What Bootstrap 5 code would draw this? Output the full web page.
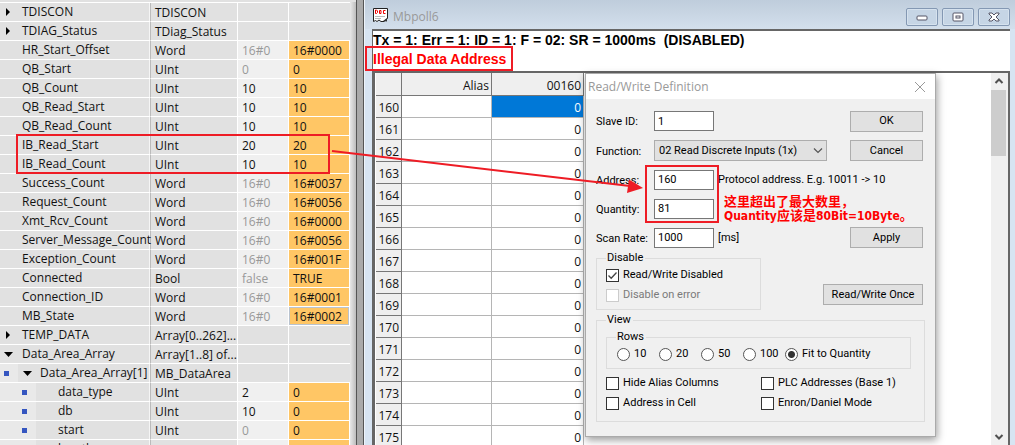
<!DOCTYPE html>
<html lang="en">
<head>
<meta charset="utf-8">
<meta name="viewport" content="width=device-width, initial-scale=1">
<title>Mbpoll6</title>
<link rel="stylesheet" href="https://cdn.jsdelivr.net/npm/bootstrap@5.3.0/dist/css/bootstrap.min.css">
<style>
body{font:12px/18px "Noto Sans","Noto Sans CJK SC",sans-serif;color:#111;background:#aaa}
/* variable table */
.vars-pane{flex:0 0 356px;background:#e1e1e1;padding-top:2px}
.vars{width:350px;table-layout:fixed;border-collapse:separate;border-spacing:0;border-top:1px solid #fff;font-family:"Open Sans","Noto Sans",sans-serif;font-size:12px;white-space:nowrap}
.vars td{height:19px;padding:1px 0 0 4px;border-bottom:1px solid #fff;line-height:17px}
.vars td:first-child{border-right:1px solid #bbb;box-shadow:inset -1px 0 #f5f5f5;padding:0 0 0 22px}
.vars td:nth-child(2),.vars td:nth-child(3){border-right:1px solid #fff}
.vars .v1{background:#f0f0f0}
.vars .v2{background:#ffc665;border-right:1px solid #fff}
.vars .dim{color:#999}
.vars .lv{display:flex;align-items:center;margin-left:-22px;height:18px;line-height:18px}
.vars .mk{width:22px;flex:none;display:flex;align-items:center;padding-left:5px}
.vars .ind{width:18px;flex:none;align-self:stretch;display:flex;align-items:center;background:#e9e9e9;padding-left:4px}
.vars .sel{box-shadow:inset 0 0 0 1px #b9c3cf}
.dot{width:5px;height:5px;background:#3556c0;display:block}
.vbar{flex:0 0 8px;background:#aaa;border-left:1px solid #555;border-right:1px solid #555}
.shade{flex:0 0 6px;background:linear-gradient(90deg,#e8e8e8,#bdbdbd)}
/* document window */
.mdi{background:#d7e4f2;padding:0 5px 0 7px;border-left:1px solid #eef4fa;overflow:hidden}
.titlebar{height:29px;background:linear-gradient(#bfcddc,#d3dfec);margin:0 -5px 0 -7px;padding:0 5px 0 7px;font-family:"Open Sans",sans-serif;font-size:12px;color:#999}
.titlebar svg{display:block}
.wbtn{width:32px;height:18px;padding:0;margin-top:5px;border:1px solid #8498b3;border-radius:2px;background:#c6d5e5;display:flex;align-items:center;justify-content:center;box-shadow:inset 0 0 0 1px #d6e2ee}
.wtitle{padding-top:6px}
.wicon{margin-top:3px}
.status{height:42px;background:#fff;border-top:2px solid #666;border-left:1px solid #666;color:#000;font:bold 14px/19px "Liberation Sans",sans-serif;white-space:pre}
.status .err{color:#f00}
.client{border:2px solid #666;border-bottom:0;border-left-width:3px;background:#fff;min-height:0;overflow:hidden}
.gridt{width:208px;table-layout:fixed;border-collapse:separate;border-spacing:0;font:12px/19px "Open Sans",sans-serif;text-align:right;margin-left:1px}
.gridt th,.gridt td{height:22px;padding:2px 2px 0;font-weight:400;border-right:1px solid #b5b5b5;border-bottom:1px solid #b5b5b5}
.gridt thead th{height:23px;padding-top:3px}
.gridt th{background:#efefef;border-color:#777}
.gridt .cur{background:#0078d7;color:#fff}
.sbar{flex:0 0 17px;background:#f0f0f0;padding-right:2px}
.thumb{height:66px;background:#cdcdcd}
.sarrow{height:17px;display:flex;align-items:center;justify-content:center}
/* dialog */
.dlg{position:absolute;left:585px;top:73px;width:351px;background:#f0f0f0;border:1px solid #aaa;box-shadow:1px 3px 8px rgba(0,0,0,.4);font:11px/14px Roboto,sans-serif;color:#000}
.dlg-title{height:25px;background:#fff;padding:0 9px 0 2px;font:12px/24px "Open Sans",sans-serif;color:#999}
.dlg-body{padding:7px 10px 14px 10px}
.frow{height:29px;display:flex;align-items:center}
.frow.first{height:30px}
.frow>label{width:58px;flex:none;padding-top:2px}
.tbox{width:60px;height:20px;border:1px solid #777;background:#fff;padding:0 3px;border-radius:0;color:#000}
.sbox{width:173px;height:21px;border:1px solid #adadad;background:#e1e1e1 url("data:image/svg+xml,%3Csvg xmlns='http://www.w3.org/2000/svg' width='10' height='6'%3E%3Cpath d='M1 .5l4 4 4-4' fill='none' stroke='%23555' stroke-width='1.2'/%3E%3C/svg%3E") no-repeat right 3px center;padding:0 4px;appearance:none;border-radius:0;color:#000}
.pbtn{width:73px;height:21px;padding:0;border:1px solid #adadad;background:#e1e1e1;color:#000;margin-left:auto;margin-right:2px}
.pbtn.wide{width:100px;align-self:end;margin-bottom:5px}
.grp{border:1px solid #dcdcdc;padding:1px 9px 4px;margin:0;min-width:0}
.grp>legend{float:none;width:auto;font-size:11px;line-height:12px;margin:0;padding:0 2px 0 1px}
.grp-off{width:165px}
.ck{height:20px;display:flex;align-items:center;gap:4px;white-space:nowrap}
.ck input{appearance:none;width:13px;height:13px;flex:none;margin:0;border:1px solid #333;background:#fff}
.ck input[type=radio]{border-radius:50%;border-color:#555}
.ck input[type=radio]:checked{background:radial-gradient(circle,#333 0 3px,#fff 4px)}
.ck input[type=checkbox]:checked{background:#fff url("data:image/svg+xml,%3Csvg xmlns='http://www.w3.org/2000/svg' width='11' height='11'%3E%3Cpath d='M1.5 5.5l2.7 2.8L9.5 2.5' fill='none' stroke='%23444' stroke-width='1.3'/%3E%3C/svg%3E")}
.ck input:disabled{border-color:#ccc}
.ck.off{color:#7a7a7a}
.radios{display:grid;grid-template-columns:repeat(4,42px) 1fr;padding-left:1px}
.checks{display:grid;grid-template-columns:155px 1fr}
/* annotations */
.note{position:absolute;left:724px;top:195px;color:#f00;font:bold 12px/14px "DejaVu Sans Condensed","Noto Sans CJK SC",sans-serif;white-space:nowrap}
.note span{font-size:13px}
.marks{position:absolute;left:0;top:0;pointer-events:none}
</style>
</head>
<body>
<div class="d-flex vh-100 overflow-hidden position-relative">
  <div class="vars-pane d-flex overflow-hidden">
    <div><table class="vars"><colgroup><col style="width:151px"><col style="width:87px"><col style="width:51px"><col></colgroup><tbody id="vars"></tbody></table></div>
    <div class="shade"></div>
  </div>
  <div class="vbar"></div>
  <main class="mdi flex-fill d-flex flex-column">
    <div class="titlebar d-flex align-items-center gap-1">
      <svg class="wicon" width="17" height="17" viewBox="0 0 17 17"><path d="M1.500 1.500H15.500V11.500L12 14.500H9L7 13L5 14.500L3.500 13.500L1.500 14.500Z" fill="#fff" stroke="#222"/><path d="M3.500 3V6.500H4.500L5.500 5.500V4L4.500 3ZM7.500 3.500H9V6.500H7.500ZM13.500 3.500H11.500V6.500H13.500" fill="none" stroke="#e00"/><path d="M3 9.500H13M3 11.500H9" stroke="#bbb"/><path d="M11 14L15 11V14.500Z" fill="#333"/></svg>
      <span class="wtitle me-auto">Mbpoll6</span>
      <button class="wbtn" aria-label="Minimize"><svg width="12" height="10"><rect x="1" y="4" width="10" height="4" rx="1" fill="#fff" stroke="#556"/></svg></button>
      <button class="wbtn" aria-label="Restore"><svg width="12" height="10"><rect x="1" y="1" width="10" height="8" rx="1" fill="#fff" stroke="#556"/><rect x="4" y="4" width="4" height="2" fill="#fff" stroke="#556"/></svg></button>
      <button class="wbtn" aria-label="Close"><svg width="12" height="10"><path d="M1 1H4L6 3L8 1H11V2L8 5L11 8V9H8L6 7L4 9H1V8L4 5L1 2Z" fill="#fff" stroke="#556"/></svg></button>
    </div>
    <div class="status"><div>Tx = 1: Err = 1: ID = 1: F = 02: SR = 1000ms  (DISABLED)</div><div class="err">Illegal Data Address</div></div>
    <div class="client flex-fill d-flex">
      <div class="me-auto"><table class="gridt"><colgroup><col style="width:26px"><col style="width:90px"><col></colgroup>
        <thead><tr><th></th><th>Alias</th><th>00160</th></tr></thead><tbody id="regs"></tbody></table></div>
      <div class="sbar d-flex flex-column">
        <div class="sarrow"><svg width="10" height="8"><path d="M1.500 6L5 2.500L8.500 6" fill="none" stroke="#505050" stroke-width="2"/></svg></div>
        <div class="thumb"></div>
        <div class="sarrow mt-auto"><svg width="10" height="8"><path d="M1.500 2L5 5.500L8.500 2" fill="none" stroke="#505050" stroke-width="2"/></svg></div>
      </div>
    </div>
  </main>

  <form class="dlg" onsubmit="return false">
    <div class="dlg-title d-flex align-items-center justify-content-between"><span>Read/Write Definition</span><svg width="12" height="12"><path d="M1 1L11 11M11 1L1 11" stroke="#999"/></svg></div>
    <div class="dlg-body">
      <div class="frow first"><label for="sid">Slave ID:</label><input class="tbox" id="sid" value="1"><button class="pbtn">OK</button></div>
      <div class="frow"><label for="fn">Function:</label><select class="sbox" id="fn"><option>02 Read Discrete Inputs (1x)</option></select><button class="pbtn">Cancel</button></div>
      <div class="frow"><label for="adr">Address:</label><input class="tbox" id="adr" value="160"><span class="ms-1 text-nowrap">Protocol address. E.g. 10011 -&gt; 10</span></div>
      <div class="frow"><label for="qty">Quantity:</label><input class="tbox" id="qty" value="81"></div>
      <div class="frow"><label for="rate">Scan Rate:</label><input class="tbox" id="rate" value="1000"><span class="ms-1">[ms]</span><button class="pbtn">Apply</button></div>
      <div class="d-flex">
        <fieldset class="grp grp-off"><legend>Disable</legend>
          <label class="ck"><input type="checkbox" checked>Read/Write Disabled</label>
          <label class="ck off"><input type="checkbox" disabled>Disable on error</label>
        </fieldset>
        <button class="pbtn wide">Read/Write Once</button>
      </div>
      <fieldset class="grp mt-1 pb-2"><legend>View</legend>
        <fieldset class="grp mt-1 me-1"><legend>Rows</legend>
          <div class="radios">
            <label class="ck"><input type="radio" name="r">10</label><label class="ck"><input type="radio" name="r">20</label><label class="ck"><input type="radio" name="r">50</label><label class="ck"><input type="radio" name="r">100</label><label class="ck"><input type="radio" name="r" checked>Fit to Quantity</label>
          </div>
        </fieldset>
        <div class="checks mt-1">
          <label class="ck"><input type="checkbox">Hide Alias Columns</label><label class="ck"><input type="checkbox">PLC Addresses (Base 1)</label>
          <label class="ck"><input type="checkbox">Address in Cell</label><label class="ck"><input type="checkbox">Enron/Daniel Mode</label>
        </div>
      </fieldset>
    </div>
  </form>
  <div class="note"><span>这里超出了最大数里，</span><br>Quantity<span>应该是</span>80Bit=10Byte<span>。</span></div>
  <svg class="marks" width="1015" height="445" fill="none" stroke="#ee1c25" stroke-width="2"><rect x="17" y="135" width="312" height="38"/><rect x="366" y="47" width="146" height="23"/><rect x="646" y="166" width="72" height="56"/><path d="M332 151L630 186"/><path d="M643 188L629 179.500L627 193Z" fill="#ee1c25" stroke="none"/></svg>
</div>
<script>
const right='<svg width="6" height="10"><path d="M1 1L5 5L1 9Z"/></svg>',down='<svg width="9" height="5"><path d="M0 0H9L4.500 5Z"/></svg>';
// name, type, start value, monitor value, kind (r: closed, d: open, 1: nested open, 2: leaf of nested)
const vars=[['TDISCON','TDISCON','','','r'],['TDIAG_Status','TDiag_Status','','','r'],['HR_Start_Offset','Word','16#0','16#0000'],['QB_Start','UInt','0','0'],['QB_Count','UInt','10','10'],['QB_Read_Start','UInt','10','10'],['QB_Read_Count','UInt','10','10'],['IB_Read_Start','UInt','20','20'],['IB_Read_Count','UInt','10','10'],['Success_Count','Word','16#0','16#0037'],['Request_Count','Word','16#0','16#0056'],['Xmt_Rcv_Count','Word','16#0','16#0000'],['Server_Message_Count','Word','16#0','16#0056'],['Exception_Count','Word','16#0','16#001F'],['Connected','Bool','false','TRUE'],['Connection_ID','Word','16#0','16#0001'],['MB_State','Word','16#0','16#0002'],['TEMP_DATA','Array[0..262]...','','','r'],['Data_Area_Array','Array[1..8] of...','','','d'],['Data_Area_Array[1]','MB_DataArea','','','1'],['data_type','UInt','2','0','2'],['db','UInt','10','0','2'],['start','UInt','0','0','2'],['length','','\u00a0','\u00a0','2']];
const dot='<i class="dot"></i>';
const lead={r:`<span class="mk">${right}</span>`,d:`<span class="mk" style="padding-left:4px">${down}</span>`,1:`<span class="ind">${dot}</span><span class="mk">${down}</span>`,2:`<span class="ind"></span><span class="ind">${dot}</span><span class="mk"></span>`};
document.getElementById('vars').innerHTML=vars.map(([n,t,a,b,k])=>`<tr><td><div class="lv">${lead[k]||'<span class="mk"></span>'}${n}</div></td><td>${t}</td><td class="${a?'v1':''} ${['0','16#0','false'].includes(a)?'dim':''}">${a}</td><td class="${b?'v2':''} ${n=='MB_State'?'sel':''}">${b}</td></tr>`).join('');
document.getElementById('regs').innerHTML=Array.from({length:16},(_,i)=>`<tr><th>${160+i}</th><td></td><td class="${i?'':'cur'}">0</td></tr>`).join('');
</script>
<script src="https://cdn.jsdelivr.net/npm/bootstrap@5.3.0/dist/js/bootstrap.bundle.min.js"></script>
</body>
</html>
